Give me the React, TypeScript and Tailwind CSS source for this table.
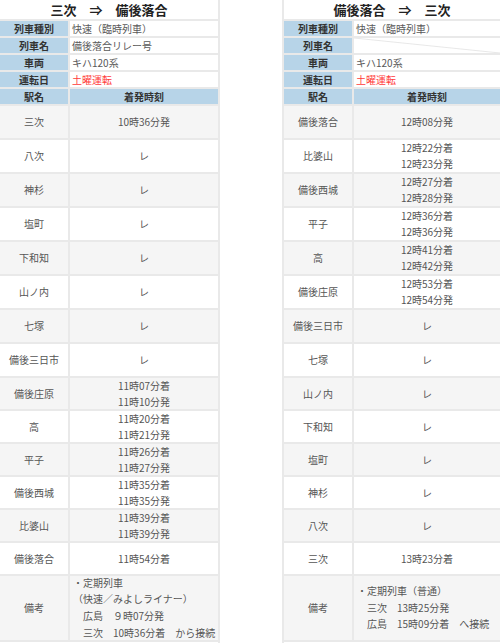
import React from "react";

type Stop = { name: string; times: string[] };
type Timetable = {
  title: string;
  kind: string;
  trainName: string | null;
  car: string;
  day: string;
  stops: Stop[];
  notes: string[];
};

const down: Timetable = {
  title: "三次　⇒　備後落合",
  kind: "快速（臨時列車）",
  trainName: "備後落合リレー号",
  car: "キハ120系",
  day: "土曜運転",
  stops: [
    { name: "三次", times: ["10時36分発"] },
    { name: "八次", times: ["レ"] },
    { name: "神杉", times: ["レ"] },
    { name: "塩町", times: ["レ"] },
    { name: "下和知", times: ["レ"] },
    { name: "山ノ内", times: ["レ"] },
    { name: "七塚", times: ["レ"] },
    { name: "備後三日市", times: ["レ"] },
    { name: "備後庄原", times: ["11時07分着", "11時10分発"] },
    { name: "高", times: ["11時20分着", "11時21分発"] },
    { name: "平子", times: ["11時26分着", "11時27分発"] },
    { name: "備後西城", times: ["11時35分着", "11時35分発"] },
    { name: "比婆山", times: ["11時39分着", "11時39分発"] },
    { name: "備後落合", times: ["11時54分着"] },
  ],
  notes: [
    "・定期列車",
    "（快速／みよしライナー）",
    "　広島　９時07分発",
    "　三次　10時36分着　から接続",
  ],
};

const up: Timetable = {
  title: "備後落合　⇒　三次",
  kind: "快速（臨時列車）",
  trainName: null,
  car: "キハ120系",
  day: "土曜運転",
  stops: [
    { name: "備後落合", times: ["12時08分発"] },
    { name: "比婆山", times: ["12時22分着", "12時23分発"] },
    { name: "備後西城", times: ["12時27分着", "12時28分発"] },
    { name: "平子", times: ["12時36分着", "12時36分発"] },
    { name: "高", times: ["12時41分着", "12時42分発"] },
    { name: "備後庄原", times: ["12時53分着", "12時54分発"] },
    { name: "備後三日市", times: ["レ"] },
    { name: "七塚", times: ["レ"] },
    { name: "山ノ内", times: ["レ"] },
    { name: "下和知", times: ["レ"] },
    { name: "塩町", times: ["レ"] },
    { name: "神杉", times: ["レ"] },
    { name: "八次", times: ["レ"] },
    { name: "三次", times: ["13時23分着"] },
  ],
  notes: ["・定期列車（普通）", "　三次　13時25分発", "　広島　15時09分着　へ接続"],
};

function InfoRow({ label, children }: { label: string; children?: React.ReactNode }) {
  return (
    <div className="flex h-[17px] border-b-2 border-[#e9e9e9]">
      <div className="w-[70px] shrink-0 bg-[#b7d4e8] border-r-2 border-[#e9e9e9] flex items-center justify-center font-bold text-[#333]">
        {label}
      </div>
      <div className="flex-1 relative flex items-center pl-[2px] bg-white text-[#595959]">{children}</div>
    </div>
  );
}

function Table({ t, className }: { t: Timetable; className: string }) {
  return (
    <div className={"flex flex-col text-[10px] leading-none " + className}>
      <div className="h-[21px] flex items-center justify-center bg-white border-b-2 border-[#e9e9e9] text-[13px] font-bold text-[#222]">
        {t.title}
      </div>
      <InfoRow label="列車種別">{t.kind}</InfoRow>
      <InfoRow label="列車名">
        {t.trainName ?? (
          <svg className="absolute inset-0 w-full h-full" preserveAspectRatio="none" viewBox="0 0 100 10">
            <line x1="0" y1="0" x2="100" y2="10" stroke="#d8d8d8" strokeWidth="0.6" vectorEffect="non-scaling-stroke" />
          </svg>
        )}
      </InfoRow>
      <InfoRow label="車両">{t.car}</InfoRow>
      <InfoRow label="運転日">
        <span className="text-[#ff3b3b]">{t.day}</span>
      </InfoRow>
      <div className="flex h-[17px] border-b-2 border-[#e9e9e9] bg-[#b7d4e8] font-bold text-[#333]">
        <div className="w-[70px] shrink-0 border-r-2 border-[#e9e9e9] flex items-center justify-center">駅名</div>
        <div className="flex-1 flex items-center justify-center">着発時刻</div>
      </div>
      {t.stops.map((s, i) => (
        <div
          key={s.name}
          className={
            "flex border-b-2 border-[#e9e9e9] text-[#555] " +
            (i < 8 ? "h-[34px] " : "h-[33px] ") +
            (i % 2 === 0 ? "bg-[#f5f5f5]" : "bg-white")
          }
        >
          <div className="w-[70px] shrink-0 border-r-2 border-[#e9e9e9] flex items-center justify-center">{s.name}</div>
          <div className="flex-1 flex flex-col items-center justify-center gap-[6px]">
            {s.times.map((x) => (
              <span key={x}>{x}</span>
            ))}
          </div>
        </div>
      ))}
      <div className="flex h-[66px] bg-[#f5f5f5] text-[#555] border-b-2 border-[#e9e9e9]">
        <div className="w-[70px] shrink-0 border-r-2 border-[#e9e9e9] flex items-center justify-center">備考</div>
        <div className="flex-1 flex flex-col justify-center pl-[3px] leading-[16.7px] whitespace-pre">
          {t.notes.map((n) => (
            <span key={n}>{n}</span>
          ))}
        </div>
      </div>
    </div>
  );
}

export default function App() {
  return (
    <div
      className="w-[500px] h-[643px] overflow-hidden bg-white flex justify-between"
      style={{ fontFamily: '"Noto Sans CJK JP", "Noto Sans", sans-serif' }}
    >
      <Table t={down} className="w-[220px] border-r-2 border-[#e9e9e9]" />
      <Table t={up} className="w-[218px] border-l-2 border-[#e9e9e9]" />
    </div>
  );
}
